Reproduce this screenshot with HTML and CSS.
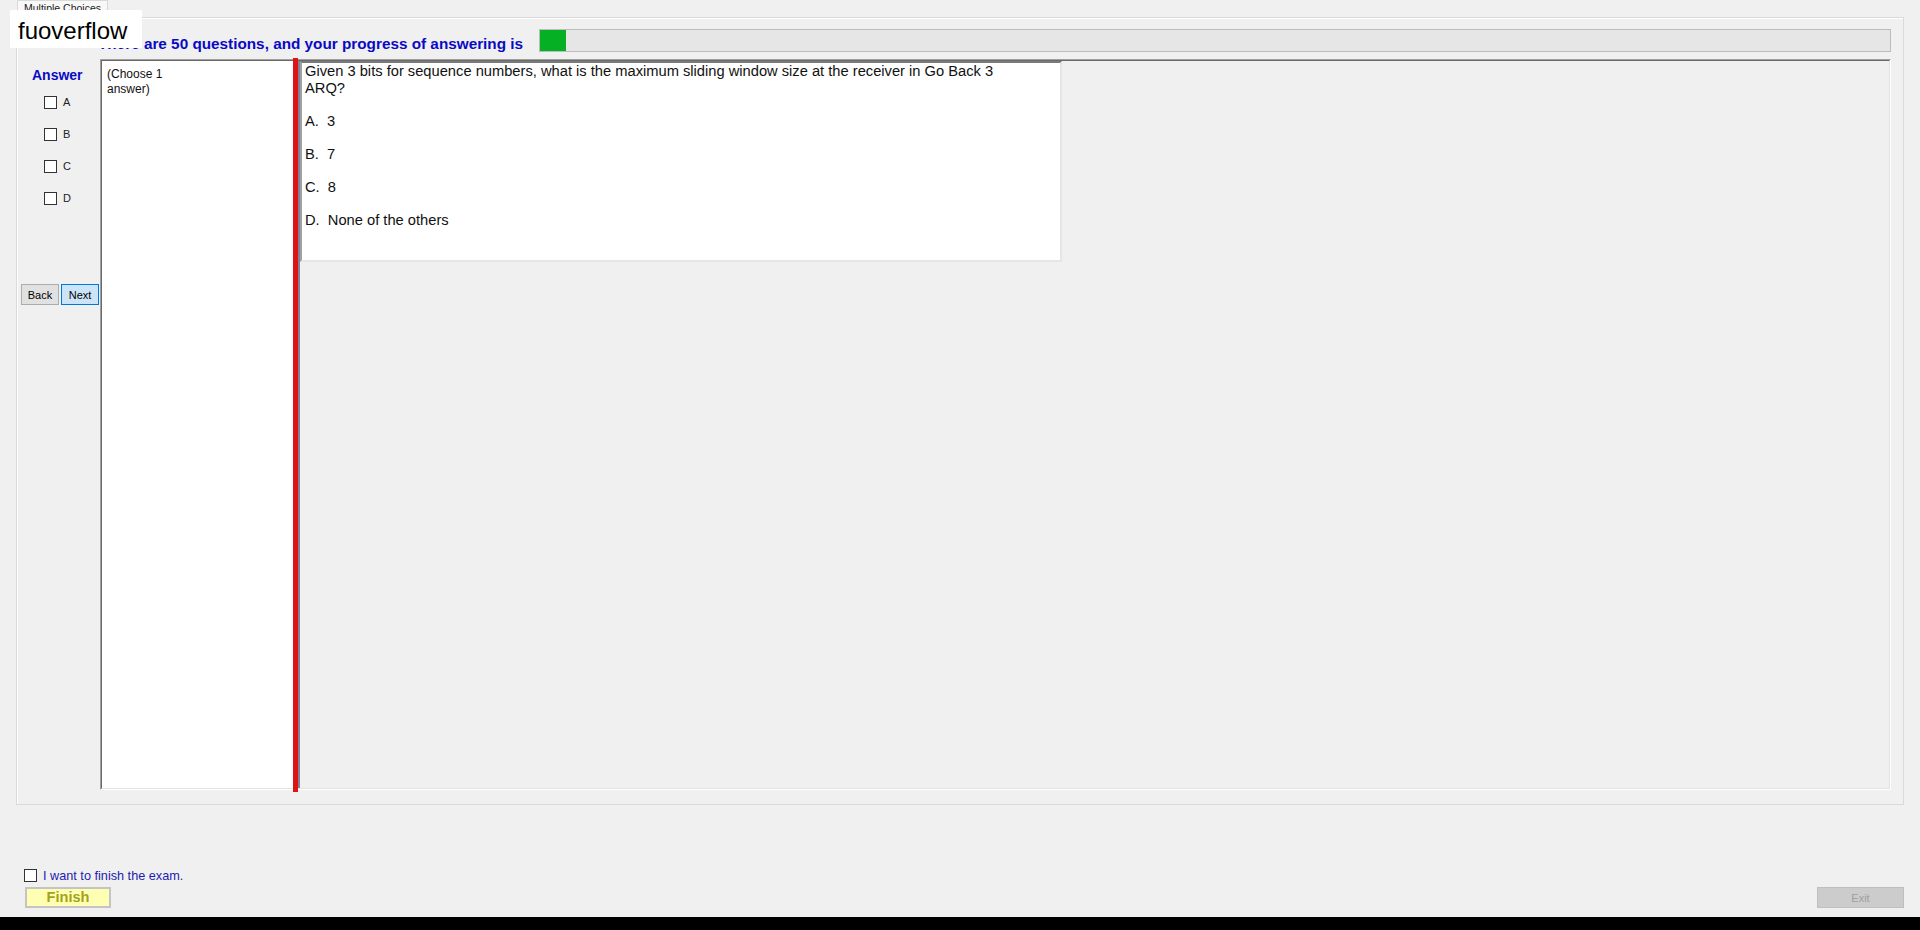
FILE: index.html
```html
<!DOCTYPE html>
<html>
<head>
<meta charset="utf-8">
<title>Multiple Choices</title>
<link rel="stylesheet" href="styles.css">
</head>
<body>
<div class="tabstrip"><div class="tab">Multiple Choices</div></div>
<div class="page">
  <div class="head">
    <div class="title">There are 50 questions, and your progress of answering is</div>
    <div class="progress"><div class="progress-fill"></div></div>
  </div>
  <div class="main">
    <div class="side">
      <div class="answer-label">Answer</div>
      <div class="options">
        <label class="opt"><span class="box"></span><span class="opt-text">A</span></label>
        <label class="opt"><span class="box"></span><span class="opt-text">B</span></label>
        <label class="opt"><span class="box"></span><span class="opt-text">C</span></label>
        <label class="opt"><span class="box"></span><span class="opt-text">D</span></label>
      </div>
      <div class="nav">
        <button class="btn back">Back</button>
        <button class="btn next">Next</button>
      </div>
    </div>
    <div class="split">
      <div class="split-inner">
        <div class="choose"><div class="choose-text">(Choose 1 answer)</div></div>
        <div class="splitter"></div>
        <div class="divider"></div>
        <div class="qarea">
          <div class="question">
            <div class="qtext">
              <div class="qline">Given 3 bits for sequence numbers, what is the maximum sliding window size at the receiver in Go Back 3 ARQ?</div>
              <div class="qline gap">A.&nbsp; 3</div>
              <div class="qline gap">B.&nbsp; 7</div>
              <div class="qline gap">C.&nbsp; 8</div>
              <div class="qline gap">D.&nbsp; None of the others</div>
            </div>
          </div>
        </div>
      </div>
    </div>
  </div>
</div>
<div class="footer">
  <div class="footer-left">
    <label class="finish-check"><span class="box"></span><span class="finish-label">I want to finish the exam.</span></label>
    <button class="finish">Finish</button>
  </div>
  <button class="exit">Exit</button>
</div>
<div class="taskbar"></div>
<div class="brand">fuoverflow</div>
</body>
</html>
```

FILE: styles.css
```css
html, body {
  margin: 0;
  padding: 0;
}
body {
  width: 1920px;
  height: 930px;
  overflow: hidden;
  background: #f0f0f0;
  font-family: "Liberation Sans", Arial, sans-serif;
  color: #000;
  position: relative;
}

/* tab header */
.tabstrip {
  height: 18px;
  display: flex;
  margin-bottom: -1px;
  position: relative;
  z-index: 1;
}
.tab {
  margin-left: 17px;
  width: 91px;
  height: 18px;
  box-sizing: border-box;
  border: 1px solid #d9d9d9;
  border-bottom: none;
  background: #f8f8f8;
  font-size: 10.5px;
  line-height: 13px;
  padding: 1px 0 0 6px;
  color: #222;
  white-space: nowrap;
  overflow: hidden;
}

/* tab page */
.page {
  margin-left: 16px;
  width: 1888px;
  height: 788px;
  box-sizing: border-box;
  border: 1px solid #dadada;
  box-shadow: inset 1px 1px 0 #ffffff;
  padding-top: 11px;
}
.head {
  height: 23px;
  display: flex;
}
.title {
  margin-left: 81px;
  margin-top: 6px;
  font-size: 15.3px;
  line-height: 17px;
  font-weight: bold;
  color: #0a0ac4;
  white-space: nowrap;
}
.progress {
  margin-left: auto;
  margin-right: 12px;
  width: 1352px;
  height: 23px;
  box-sizing: border-box;
  border: 1px solid #bcbcbc;
  background: #e6e6e6;
  display: flex;
}
.progress-fill {
  width: 26px;
  background: #06b025;
}

.main {
  margin-top: 7px;
  height: 731px;
  display: flex;
}
.side {
  width: 83px;
  display: flex;
  flex-direction: column;
  padding-top: 8px;
  box-sizing: border-box;
}
.answer-label {
  margin-left: 15px;
  font-size: 14px;
  line-height: 16px;
  font-weight: bold;
  color: #0a0ac4;
}
.options {
  margin-top: 13px;
  margin-left: 27px;
  display: flex;
  flex-direction: column;
  gap: 19px;
}
.opt {
  display: flex;
  align-items: center;
  height: 13px;
}
.box {
  width: 13px;
  height: 13px;
  box-sizing: border-box;
  border: 1px solid #333;
  background: #fff;
  flex: none;
}
.opt-text {
  margin-left: 6px;
  font-size: 11px;
  line-height: 13px;
  color: #222;
}
.nav {
  margin-top: 79px;
  margin-left: 4px;
  display: flex;
  gap: 2px;
}
.btn {
  width: 38px;
  height: 21px;
  box-sizing: border-box;
  padding: 0;
  font-family: "Liberation Sans", Arial, sans-serif;
  font-size: 11px;
  color: #000;
  border: 1px solid #adadad;
  background: #e1e1e1;
}
.btn.next {
  background: #cce4f7;
  border-color: #0078d7;
}

/* split container (Fixed3D) */
.split {
  width: 1791px;
  height: 731px;
  box-sizing: border-box;
  border: 1px solid;
  border-color: #a0a0a0 #ffffff #ffffff #a0a0a0;
}
.split-inner {
  height: 100%;
  box-sizing: border-box;
  border: 1px solid;
  border-color: #696969 #e3e3e3 #e3e3e3 #696969;
  display: flex;
}
.choose {
  width: 191px;
  background: #fff;
  padding: 6px 0 0 5px;
  box-sizing: border-box;
}
.choose-text {
  width: 75px;
  font-size: 12px;
  line-height: 15px;
  color: #111;
}
.splitter {
  width: 5px;
  background: #dc1414;
  margin-top: -3px;
  margin-bottom: -4px;
}
.divider {
  width: 2px;
  background: #857f9c;
}
.qarea {
  flex: 1;
  background: #f0f0f0;
}
.question {
  width: 762px;
  height: 201px;
  box-sizing: border-box;
  background: #fff;
  border-style: solid;
  border-width: 2px;
  border-color: #7a7a7a #e6e6e6 #e6e6e6 #a0a0a0;
  padding: 0 0 0 3px;
}
.qtext {
  width: 720px;
  font-size: 14.7px;
  line-height: 16.6px;
  color: #111;
}
.qline.gap {
  margin-top: 16.6px;
}

/* footer */
.footer {
  height: 112px;
  box-sizing: border-box;
  display: flex;
  justify-content: space-between;
  align-items: flex-end;
  padding: 0 16px 9px 24px;
}
.footer-left {
  display: flex;
  flex-direction: column;
  align-items: flex-start;
}
.finish-check {
  display: flex;
  align-items: center;
  height: 13px;
}
.finish-label {
  margin-left: 6px;
  font-size: 12.7px;
  line-height: 14px;
  color: #1c1cb0;
  white-space: nowrap;
}
.finish {
  margin-top: 5px;
  margin-left: 1px;
  width: 86px;
  height: 21px;
  box-sizing: border-box;
  padding: 0;
  border: 2px solid #c4c4c4;
  background: #ffffb4;
  color: #a3a31a;
  font-family: "Liberation Sans", Arial, sans-serif;
  font-weight: bold;
  font-size: 14.6px;
  line-height: 17px;
}
.exit {
  width: 87px;
  height: 21px;
  box-sizing: border-box;
  padding: 0;
  border: 1px solid #bfbfbf;
  background: #cccccc;
  color: #a0a0a0;
  font-family: "Liberation Sans", Arial, sans-serif;
  font-size: 11px;
}
.taskbar {
  height: 13px;
  background: #000;
}

/* overlay badge */
.brand {
  position: absolute;
  left: 10px;
  top: 10px;
  width: 132px;
  height: 38px;
  box-sizing: border-box;
  padding: 7px 0 0 8px;
  background: #fff;
  font-size: 24px;
  line-height: 28px;
  color: #000;
  z-index: 2;
}
```
